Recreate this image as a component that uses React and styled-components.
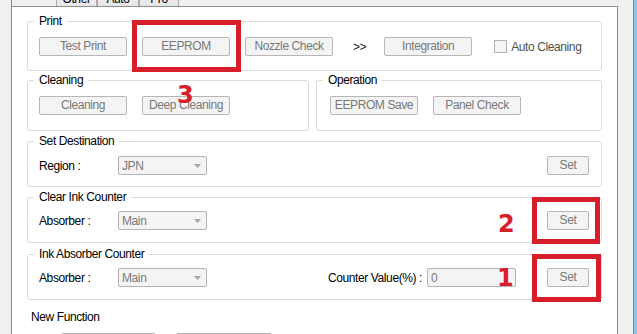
import React from "react";
import styled, { createGlobalStyle } from "styled-components";

const GlobalStyle = createGlobalStyle`
  html, body { margin: 0; padding: 0; background: #f0f0f0; overflow: hidden; }
  body { font-family: "Liberation Sans", Arial, sans-serif; font-size: 12px; letter-spacing: -0.4px; }
`;

const Screen = styled.div`
  position: relative;
  width: 637px;
  height: 334px;
  overflow: hidden;
  display: flex;
  background: #f0f0f0;
`;

const Main = styled.div`
  flex: 1;
  min-width: 0;
  display: flex;
  padding: 0 15px 0 11px;
`;

const WindowEdge = styled.div`
  width: 4px;
  flex: none;
  box-sizing: border-box;
  border-left: 1px solid #3d9be0;
  background: #86c8f1;
`;

const Frame = styled.div`
  flex: 1;
  min-width: 0;
  display: flex;
  flex-direction: column;
  border-left: 1px solid #8d8d8d;
`;

const TabStrip = styled.div`
  flex: none;
  height: 20px;
  margin-top: -14px;
  display: flex;
  padding-left: 44px;
`;

const Tab = styled.div`
  width: ${(p) => p.$w}px;
  box-sizing: border-box;
  border: 1px solid #acacac;
  border-bottom: none;
  background: linear-gradient(#f4f4f4, #e6e6e6);
  padding-top: 5px;
  line-height: 14px;
  text-align: center;
  color: #000;
`;

const Page = styled.div`
  flex: 1;
  background: #fff;
  border-top: 1px solid #8d8d8d;
  border-right: 1px solid #8d8d8d;
  padding: 14px 15px 0 15px;
  display: flex;
  flex-direction: column;
`;

const GroupRow = styled.div`
  display: flex;
  gap: 7px;
  margin-top: ${(p) => p.$mt || 0}px;
`;

const Group = styled.div`
  flex: ${(p) => (p.$w ? "none" : p.$flex ? 1 : "none")};
  width: ${(p) => (p.$w ? `${p.$w}px` : "auto")};
  box-sizing: border-box;
  min-width: 0;
  display: flex;
  flex-direction: column;
  border: 1px solid #dcdcdc;
  border-radius: 3px;
  padding-bottom: ${(p) => p.$pb}px;
  margin-top: ${(p) => p.$mt || 0}px;
`;

const Title = styled.div`
  align-self: flex-start;
  margin: -8px 0 0 6px;
  padding: 0 5px;
  background: #fff;
  line-height: 14px;
  color: #000;
`;

const Row = styled.div`
  display: flex;
  align-items: center;
  height: 19px;
  gap: ${(p) => p.$gap || 0}px;
  margin-top: ${(p) => p.$mt}px;
  padding: 0 12px 0 ${(p) => p.$pl ?? 11}px;
`;

const Button = styled.button`
  flex: none;
  width: ${(p) => p.$w || 88}px;
  height: 19px;
  box-sizing: border-box;
  padding: 0;
  border: 1px solid #b6b6b6;
  border-radius: 2px;
  background: #f4f4f4;
  color: #787878;
  font-family: "Liberation Sans", Arial, sans-serif;
  font-size: 12px;
  letter-spacing: -0.4px;
  line-height: 17px;
`;

const Arrow = styled.span`
  margin: 0 3px 0 5px;
  color: #222;
`;

const CheckField = styled.span`
  display: flex;
  align-items: center;
  gap: 4px;
  margin-left: 7px;
  color: #505050;
`;

const CheckBox = styled.span`
  width: 13px;
  height: 13px;
  box-sizing: border-box;
  border: 1px solid #b3b3b3;
  background: #f4f4f4;
  flex: none;
`;

const FieldLabel = styled.span`
  flex: none;
  width: 79px;
  color: #000;
`;

const Select = styled.div`
  flex: none;
  width: 89px;
  height: 19px;
  box-sizing: border-box;
  display: flex;
  align-items: center;
  justify-content: space-between;
  padding: 0 5px 0 3px;
  border: 1px solid #b3b3b3;
  border-radius: 2px;
  background: #f4f4f4;
  color: #7a7a7a;
`;

const Spacer = styled.span`
  flex: 1;
`;

const CounterLabel = styled.span`
  flex: none;
  margin-right: 5px;
  color: #000;
`;

const Input = styled.div`
  flex: none;
  width: 89px;
  height: 19px;
  box-sizing: border-box;
  display: flex;
  align-items: center;
  padding-left: 3px;
  margin-right: 31px;
  border: 1px solid #b3b3b3;
  border-radius: 2px;
  background: #f4f4f4;
  color: #7a7a7a;
`;

const NewLabel = styled.div`
  margin: 10px 0 0 4px;
  line-height: 14px;
  color: #000;
`;

const BottomRow = styled.div`
  display: flex;
  gap: 20px;
  margin-top: 9px;
  padding-left: 34px;
`;

const Mark = styled.div`
  position: absolute;
  left: ${(p) => p.$x}px;
  top: ${(p) => p.$y}px;
  width: ${(p) => p.$w}px;
  height: ${(p) => p.$h}px;
  box-sizing: border-box;
  border: 5px solid #d81e2a;
`;

const Num = styled.span`
  position: absolute;
  left: ${(p) => p.$x}px;
  top: ${(p) => p.$y}px;
  font-family: "DejaVu Sans", sans-serif;
  font-weight: bold;
  font-size: 24px;
  line-height: 24px;
  letter-spacing: 0;
  color: #d81e2a;
`;

const Caret = () => (
  <svg width="7" height="4" viewBox="0 0 7 4">
    <path d="M0 0 H7 L3.5 4 Z" fill="#a6a6a6" />
  </svg>
);

export default function App() {
  return (
    <>
      <GlobalStyle />
      <Screen>
        <Main>
          <Frame>
            <TabStrip>
              <Tab $w={41}>Other</Tab>
              <Tab $w={42}>Auto</Tab>
              <Tab $w={40}>Pro</Tab>
            </TabStrip>
            <Page>
              <Group $pb={14}>
                <Title>Print</Title>
                <Row $mt={9} $gap={15}>
                  <Button>Test Print</Button>
                  <Button>EEPROM</Button>
                  <Button>Nozzle Check</Button>
                  <Arrow>&gt;&gt;</Arrow>
                  <Button>Integration</Button>
                  <CheckField>
                    <CheckBox />
                    Auto Cleaning
                  </CheckField>
                </Row>
              </Group>

              <GroupRow $mt={9}>
                <Group $w={282} $pb={15}>
                  <Title>Cleaning</Title>
                  <Row $mt={9} $gap={15}>
                    <Button>Cleaning</Button>
                    <Button>Deep Cleaning</Button>
                  </Row>
                </Group>
                <Group $flex $pb={15}>
                  <Title>Operation</Title>
                  <Row $mt={9} $gap={15} $pl={13}>
                    <Button>EEPROM Save</Button>
                    <Button>Panel Check</Button>
                  </Row>
                </Group>
              </GroupRow>

              <Group $mt={10} $pb={11}>
                <Title>Set Destination</Title>
                <Row $mt={8}>
                  <FieldLabel>Region :</FieldLabel>
                  <Select>
                    JPN
                    <Caret />
                  </Select>
                  <Spacer />
                  <Button $w={42}>Set</Button>
                </Row>
              </Group>

              <Group $mt={10} $pb={12}>
                <Title>Clear Ink Counter</Title>
                <Row $mt={7}>
                  <FieldLabel>Absorber :</FieldLabel>
                  <Select>
                    Main
                    <Caret />
                  </Select>
                  <Spacer />
                  <Button $w={42}>Set</Button>
                </Row>
              </Group>

              <Group $mt={11} $pb={12}>
                <Title>Ink Absorber Counter</Title>
                <Row $mt={7}>
                  <FieldLabel>Absorber :</FieldLabel>
                  <Select>
                    Main
                    <Caret />
                  </Select>
                  <Spacer />
                  <CounterLabel>Counter Value(%) :</CounterLabel>
                  <Input>0</Input>
                  <Button $w={42}>Set</Button>
                </Row>
              </Group>

              <NewLabel>New Function</NewLabel>
              <BottomRow>
                <Button $w={95}>Ink Function</Button>
                <Button $w={96}>Other Function</Button>
              </BottomRow>
            </Page>
          </Frame>
        </Main>
        <WindowEdge />

        <Mark $x={132} $y={20} $w={109} $h={52} />
        <Mark $x={532} $y={197} $w={68} $h={47} />
        <Mark $x={532} $y={254} $w={69} $h={48} />
        <Num $x={177} $y={83}>3</Num>
        <Num $x={498} $y={212}>2</Num>
        <Num $x={497} $y={266}>1</Num>
      </Screen>
    </>
  );
}
